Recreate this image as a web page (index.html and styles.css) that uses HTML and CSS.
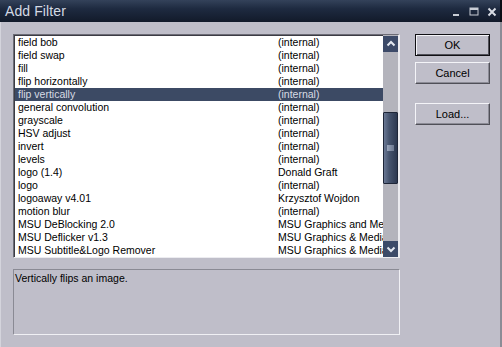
FILE: index.html
```html
<!DOCTYPE html>
<html>
<head>
<meta charset="utf-8">
<link rel="stylesheet" href="styles.css">
</head>
<body>
<div class="window">
  <div class="titlebar">
    <span class="title">Add Filter</span>
    <div class="ctrls">
      <svg class="ctl" width="10" height="10" viewBox="0 0 10 10"><rect x="2" y="7" width="6" height="2" fill="#c8ccd4"/></svg>
      <svg class="ctl" width="10" height="10" viewBox="0 0 10 10"><rect x="1" y="1" width="8" height="7" fill="none" stroke="#c8ccd4" stroke-width="1"/><rect x="1" y="1" width="8" height="2" fill="#c8ccd4"/></svg>
      <svg class="ctl" width="10" height="10" viewBox="0 0 10 10"><path d="M1.5 1.5 L8.5 8.5 M8.5 1.5 L1.5 8.5" stroke="#d8dce4" stroke-width="2"/></svg>
    </div>
  </div>
  <div class="content">
    <div class="left">
      <div class="listbox">
        <div class="rows">
          <div class="row"><span class="name">field bob</span><span class="author">(internal)</span></div>
          <div class="row"><span class="name">field swap</span><span class="author">(internal)</span></div>
          <div class="row"><span class="name">fill</span><span class="author">(internal)</span></div>
          <div class="row"><span class="name">flip horizontally</span><span class="author">(internal)</span></div>
          <div class="row sel"><span class="name">flip vertically</span><span class="author">(internal)</span></div>
          <div class="row"><span class="name">general convolution</span><span class="author">(internal)</span></div>
          <div class="row"><span class="name">grayscale</span><span class="author">(internal)</span></div>
          <div class="row"><span class="name">HSV adjust</span><span class="author">(internal)</span></div>
          <div class="row"><span class="name">invert</span><span class="author">(internal)</span></div>
          <div class="row"><span class="name">levels</span><span class="author">(internal)</span></div>
          <div class="row"><span class="name">logo (1.4)</span><span class="author">Donald Graft</span></div>
          <div class="row"><span class="name">logo</span><span class="author">(internal)</span></div>
          <div class="row"><span class="name">logoaway v4.01</span><span class="author">Krzysztof Wojdon</span></div>
          <div class="row"><span class="name">motion blur</span><span class="author">(internal)</span></div>
          <div class="row"><span class="name">MSU DeBlocking 2.0</span><span class="author">MSU Graphics and Media Lab</span></div>
          <div class="row"><span class="name">MSU Deflicker v1.3</span><span class="author">MSU Graphics &amp; Media Lab</span></div>
          <div class="row"><span class="name">MSU Subtitle&amp;Logo Remover</span><span class="author">MSU Graphics &amp; Media Lab</span></div>
        </div>
        <div class="scrollbar">
          <div class="arrow"><svg width="14" height="14" viewBox="0 0 14 14"><path d="M3.5 8.5 L7 5 L10.5 8.5" fill="none" stroke="#e4e8f0" stroke-width="2"/></svg></div>
          <div class="track">
            <div class="thumb"><div class="grip"></div></div>
          </div>
          <div class="arrow"><svg width="14" height="14" viewBox="0 0 14 14"><path d="M3.5 5.5 L7 9 L10.5 5.5" fill="none" stroke="#e4e8f0" stroke-width="2"/></svg></div>
        </div>
      </div>
      <div class="desc">Vertically flips an image.</div>
    </div>
    <div class="buttons">
      <div class="btn default">OK</div>
      <div class="btn">Cancel</div>
      <div class="btn load">Load...</div>
    </div>
  </div>
</div>
</body>
</html>
```
FILE: styles.css
```css
* { box-sizing: border-box; }
html, body { margin: 0; padding: 0; }
body {
  width: 502px;
  height: 347px;
  overflow: hidden;
  font-family: "Liberation Sans", Arial, sans-serif;
  font-size: 10.5px;
  color: #000;
  background: #bfbec9;
}
.window {
  width: 502px;
  height: 347px;
  display: flex;
  flex-direction: column;
  background: #bfbec9;
  border-right: 2px solid #8c8c96;
  border-left: 1px solid #d4d4dc;
}
.titlebar {
  height: 22px;
  flex: none;
  display: flex;
  align-items: center;
  justify-content: space-between;
  background: linear-gradient(#34425a, #1e2a40 40%, #121a2a);
  padding: 0 3px 0 5px;
  margin-left: -1px;
  margin-right: -2px;
  border-right: 2px solid #0a0e16;
}
.title {
  font-size: 14px;
  color: #d4dae4;
  letter-spacing: 0.1px;
}
.ctrls { display: flex; gap: 8px; align-items: center; padding-top: 2px; }
.ctl { display: block; }
.content {
  flex: 1;
  display: flex;
  padding: 12px 0 0 12px;
}
.left {
  width: 387px;
  display: flex;
  flex-direction: column;
  gap: 11px;
}
.listbox {
  height: 224px;
  display: flex;
  background: #fff;
  border-top: 1px solid #6c6c76;
  border-left: 1px solid #6c6c76;
  border-right: 2px solid #ececf0;
  border-bottom: 1px solid #ececf0;
  box-shadow: inset 1px 1px 0 #3c3c44;
  overflow: hidden;
}
.rows {
  flex: 1;
  padding: 1px 0 0 1px;
  overflow: hidden;
}
.row {
  height: 13px;
  line-height: 13px;
  display: flex;
  white-space: nowrap;
}
.row .name { width: 263px; padding-left: 3px; flex: none; }
.row .author { flex: 1; overflow: hidden; }
.row.sel { background: #3c4a64; color: #d8dce4; }
.scrollbar {
  width: 15px;
  flex: none;
  display: flex;
  flex-direction: column;
  background: #b4b4bc;
  padding-top: 1px;
}
.arrow {
  height: 16px;
  flex: none;
  background: #3c4a68;
  display: flex;
  align-items: center;
  justify-content: center;
}
.arrow svg { display: block; }
.track {
  flex: 1;
  padding-top: 60px;
}
.thumb {
  height: 72px;
  background: linear-gradient(90deg, #6a7894, #46546e 40%, #2c3850);
  border: 1px solid #1e2638;
  border-radius: 1px;
  display: flex;
  align-items: center;
  justify-content: center;
}
.grip {
  width: 7px;
  height: 6px;
  background: linear-gradient(90deg, #9aa6bc, #6c7890);
}
.desc {
  height: 66px;
  border-top: 1px solid #8a8a94;
  border-left: 1px solid #8a8a94;
  border-right: 1px solid #f0f0f4;
  border-bottom: 1px solid #f0f0f4;
  padding: 2px 0 0 1px;
  line-height: 13px;
}
.buttons {
  margin-left: 15px;
  width: 75px;
  display: flex;
  flex-direction: column;
}
.btn {
  height: 22px;
  line-height: 20px;
  text-align: center;
  background: #bfbec9;
  border-top: 1px solid #f4f4f8;
  border-left: 1px solid #f4f4f8;
  border-right: 1px solid #505058;
  border-bottom: 1px solid #505058;
  box-shadow: inset -1px -1px 0 #8c8c96;
  font-size: 11px;
}
.btn.default {
  border: 1px solid #101014;
  box-shadow: inset 1px 1px 0 #f4f4f8, inset -1px -1px 0 #505058;
  margin-bottom: 6px;
}
.btn.load { margin-top: 19px; }
```
